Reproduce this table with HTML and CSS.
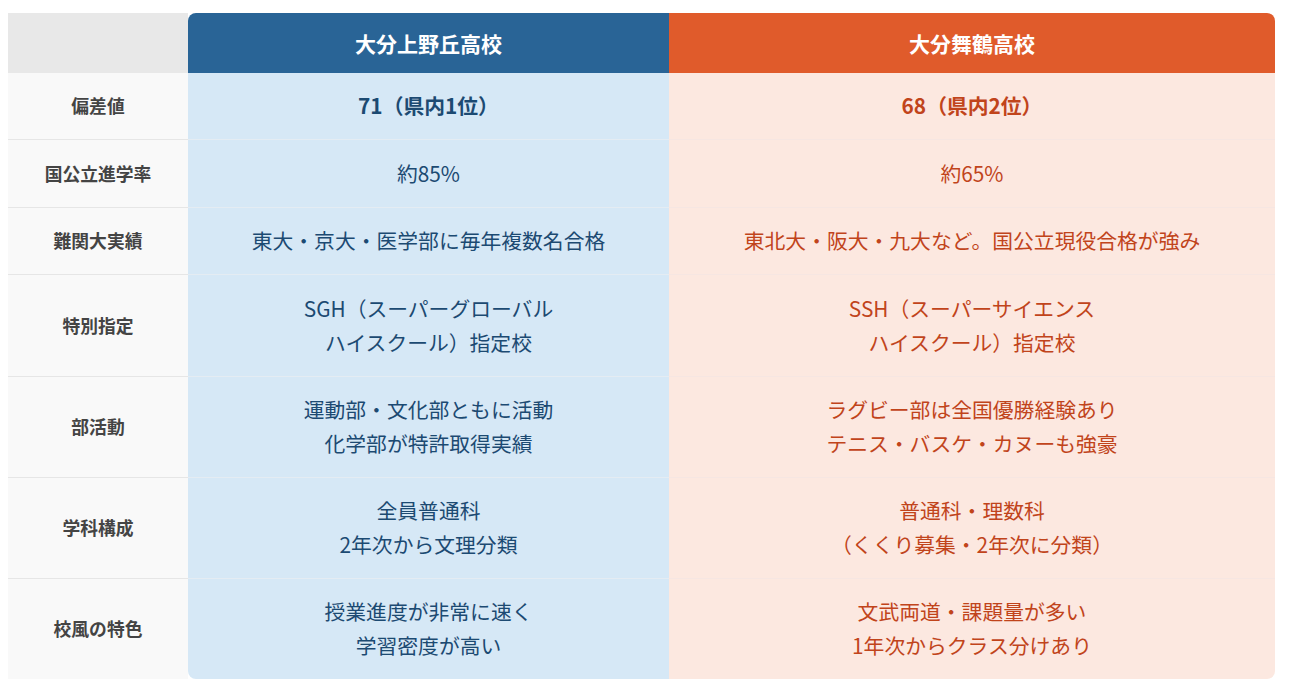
FILE: index.html
```html
<!DOCTYPE html>
<html lang="ja">
<head>
<meta charset="utf-8">
<link rel="stylesheet" href="styles.css">
</head>
<body>
<table class="cmp">
  <colgroup>
    <col class="c-label">
    <col class="c-a">
    <col class="c-b">
  </colgroup>
  <thead>
    <tr>
      <th class="corner"></th>
      <th class="head head-a">大分上野丘高校</th>
      <th class="head head-b">大分舞鶴高校</th>
    </tr>
  </thead>
  <tbody>
    <tr>
      <th class="label">偏差値</th>
      <td class="a strong">71（県内1位）</td>
      <td class="b strong">68（県内2位）</td>
    </tr>
    <tr>
      <th class="label">国公立進学率</th>
      <td class="a">約85%</td>
      <td class="b">約65%</td>
    </tr>
    <tr>
      <th class="label">難関大実績</th>
      <td class="a">東大・京大・医学部に毎年複数名合格</td>
      <td class="b">東北大・阪大・九大など。国公立現役合格が強み</td>
    </tr>
    <tr>
      <th class="label">特別指定</th>
      <td class="a">SGH（スーパーグローバル<br>ハイスクール）指定校</td>
      <td class="b">SSH（スーパーサイエンス<br>ハイスクール）指定校</td>
    </tr>
    <tr>
      <th class="label">部活動</th>
      <td class="a">運動部・文化部ともに活動<br>化学部が特許取得実績</td>
      <td class="b">ラグビー部は全国優勝経験あり<br>テニス・バスケ・カヌーも強豪</td>
    </tr>
    <tr>
      <th class="label">学科構成</th>
      <td class="a">全員普通科<br>2年次から文理分類</td>
      <td class="b">普通科・理数科<br>（くくり募集・2年次に分類）</td>
    </tr>
    <tr class="last">
      <th class="label">校風の特色</th>
      <td class="a">授業進度が非常に速く<br>学習密度が高い</td>
      <td class="b">文武両道・課題量が多い<br>1年次からクラス分けあり</td>
    </tr>
  </tbody>
</table>
</body>
</html>
```

FILE: styles.css
```css
html, body {
  margin: 0;
  padding: 0;
  background: #ffffff;
}

body {
  padding: 13px 0 0 8px;
  font-family: "Noto Sans CJK JP", "Noto Sans", sans-serif;
}

.cmp {
  width: 1267px;
  border-collapse: separate;
  border-spacing: 0;
  table-layout: fixed;
}

.c-label { width: 180px; }
.c-a { width: 481px; }
.c-b { width: 606px; }

.cmp th,
.cmp td {
  padding: 16.4px 10px;
  text-align: center;
  vertical-align: middle;
  line-height: 33.7px;
  border-bottom: 1px solid #e6e6e6;
}

.cmp .corner {
  background: #e8e8e8;
  padding: 0;
  line-height: 60px;
  border-bottom: none;
}

.cmp .head {
  padding: 0 10px;
  line-height: 60px;
  color: #ffffff;
  font-size: 21px;
  font-weight: 700;
  border-bottom: none;
}

.head-a {
  background: #296496;
  border-top-left-radius: 8px;
}

.head-b {
  background: #e05b2b;
  border-top-right-radius: 8px;
}

.label {
  background: #f9f9f9;
  color: #444444;
  font-size: 17.8px;
  font-weight: 700;
}

.a,
.b {
  font-size: 20.8px;
  font-weight: 400;
}

.cmp .a {
  background: #d6e8f6;
  color: #1c4a72;
  border-bottom-color: #e4ecf3;
}

.cmp .b {
  background: #fce8e0;
  color: #c1441b;
  border-bottom-color: #f6e6e2;
}

.cmp .strong {
  font-weight: 700;
}

.cmp .last th,
.cmp .last td {
  border-bottom: none;
}

.last .a {
  border-bottom-left-radius: 8px;
}

.last .b {
  border-bottom-right-radius: 8px;
}
```
